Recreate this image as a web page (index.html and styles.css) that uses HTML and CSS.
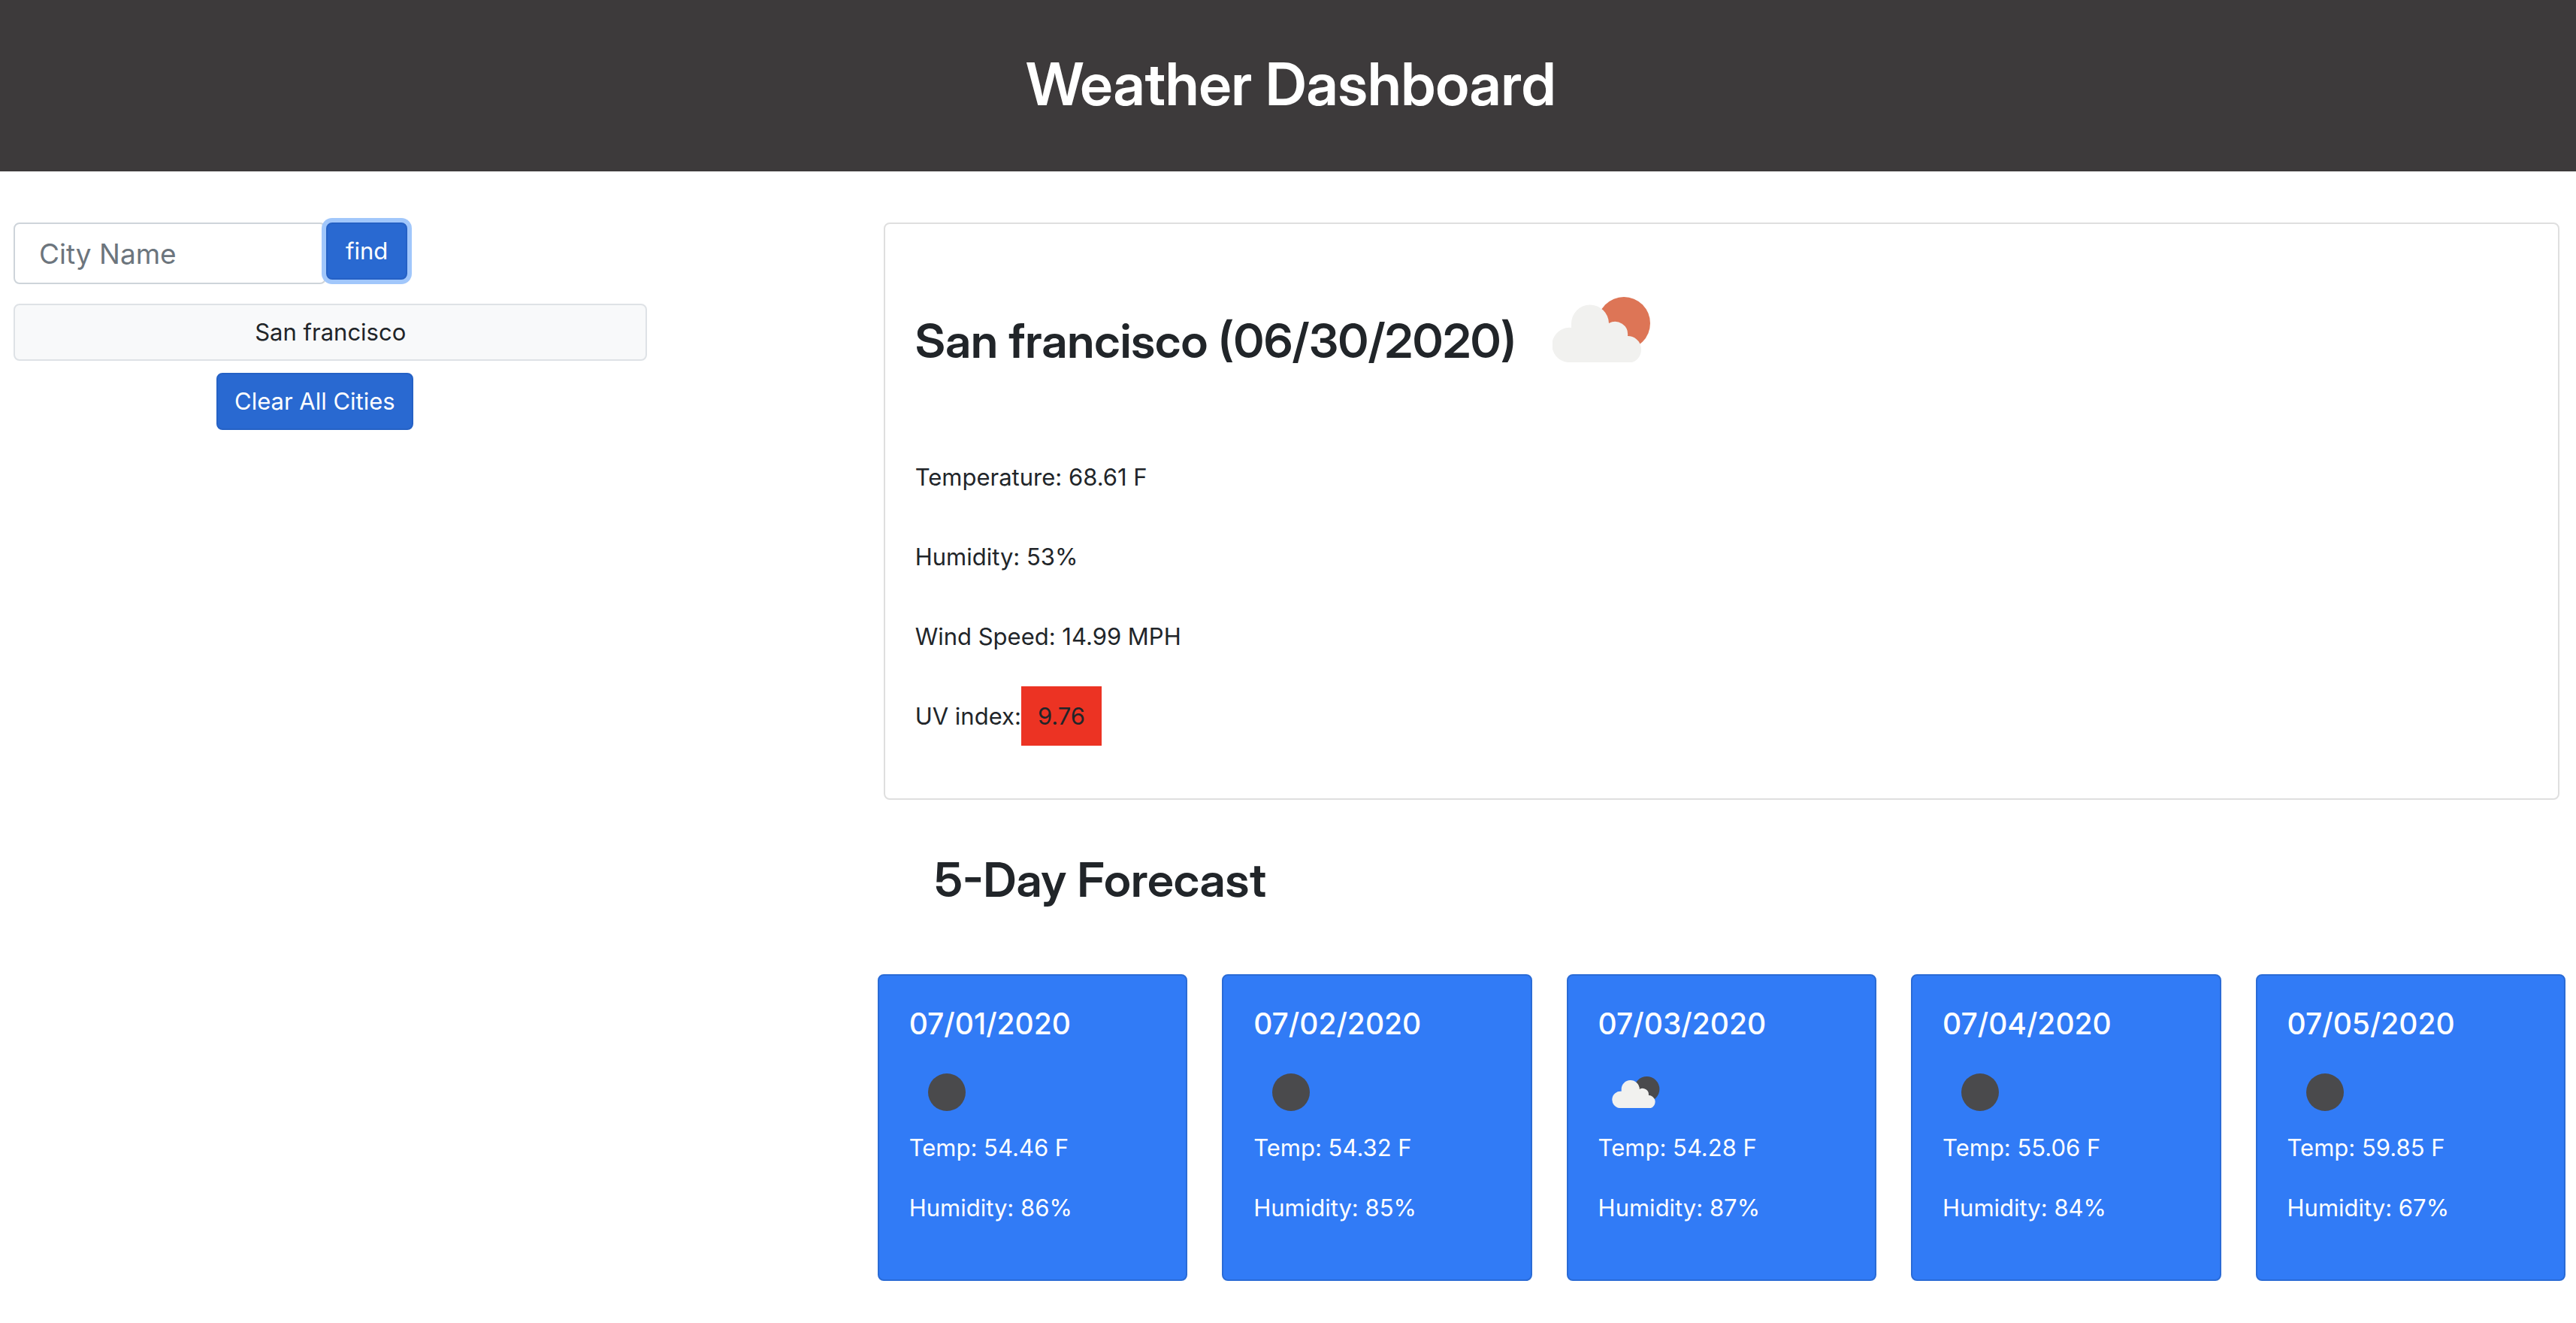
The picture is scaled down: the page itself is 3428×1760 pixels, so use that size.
FILE: index.html
```html
<!DOCTYPE html>
<html lang="en">
<head>
<meta charset="utf-8">
<meta name="viewport" content="width=device-width, initial-scale=1">
<title>Weather Dashboard</title>
<link rel="stylesheet" href="styles.css">
</head>
<body>
<svg class="sprite" aria-hidden="true">
  <symbol id="cloud" viewBox="0 0 130 87">
    <circle class="disc" cx="95" cy="35" r="35"/>
    <path class="cloud" d="M20 87A23 23 0 0 1 25 41V36A25 25 0 0 1 75 35A17 17 0 0 1 100 52A18 18 0 0 1 106 87Z"/>
  </symbol>
</svg>
<header class="banner"><h1>Weather Dashboard</h1></header>
<main class="layout">
  <section class="search">
    <form class="search-form">
      <input class="city-input" type="text" placeholder="City Name" aria-label="City Name">
      <button class="btn btn-focus" type="button">find</button>
    </form>
    <button class="city" type="button">San francisco</button>
    <button class="btn clear" type="button">Clear All Cities</button>
  </section>
  <section class="weather">
    <article class="current">
      <div class="current-head">
        <h2>San francisco (06/30/2020)</h2>
        <svg class="icon-large" role="img" aria-label="Broken clouds"><use href="#cloud"/></svg>
      </div>
      <p>Temperature: 68.61 F</p>
      <p>Humidity: 53%</p>
      <p>Wind Speed: 14.99 MPH</p>
      <p>UV index:<span class="uv">9.76</span></p>
    </article>
    <h2 class="forecast-title">5-Day Forecast</h2>
    <div class="forecast">
      <article class="day">
        <h3>07/01/2020</h3>
        <div class="day-icon"><span class="moon"></span></div>
        <p>Temp: 54.46 F</p>
        <p>Humidity: 86%</p>
      </article>
      <article class="day">
        <h3>07/02/2020</h3>
        <div class="day-icon"><span class="moon"></span></div>
        <p>Temp: 54.32 F</p>
        <p>Humidity: 85%</p>
      </article>
      <article class="day">
        <h3>07/03/2020</h3>
        <div class="day-icon"><svg class="icon-small" role="img" aria-label="Few clouds"><use href="#cloud"/></svg></div>
        <p>Temp: 54.28 F</p>
        <p>Humidity: 87%</p>
      </article>
      <article class="day">
        <h3>07/04/2020</h3>
        <div class="day-icon"><span class="moon"></span></div>
        <p>Temp: 55.06 F</p>
        <p>Humidity: 84%</p>
      </article>
      <article class="day">
        <h3>07/05/2020</h3>
        <div class="day-icon"><span class="moon"></span></div>
        <p>Temp: 59.85 F</p>
        <p>Humidity: 67%</p>
      </article>
    </div>
  </section>
</main>
</body>
</html>
```
FILE: styles.css
```css
* { box-sizing: border-box; }
body {
  margin: 0;
  background: #fff;
  color: #212529;
  font: 400 31px/48px Inter, "Liberation Sans", sans-serif;
}
h1, h2, h3, p { margin: 0; }
h1, h2 { font-family: "Inter Display", Inter, "Liberation Sans", sans-serif; font-weight: 600; }
h3 { font-weight: 500; }
p { font-weight: 400; }
button, input { font: inherit; }
.sprite { display: none; }

.banner {
  padding: 64px 0 68px 8px;
  background: #3d3a3b;
  color: #fff;
  text-align: center;
}
.banner h1 { font-size: 78px; line-height: 96px; }

.layout {
  display: grid;
  grid-template-columns: 1fr 2fr;
  padding-top: 68px;
}

.search {
  display: flex;
  flex-direction: column;
  align-items: flex-start;
  padding-left: 18px;
}
.search-form { display: flex; align-items: flex-start; }
.city-input {
  width: 416px;
  height: 82px;
  padding: 0 32px;
  border: 2px solid #ced4da;
  border-radius: 8px;
  background: #fff;
  color: #495057;
  font-size: 37px;
}
.city-input::placeholder { color: #6c757d; opacity: 1; }
.btn {
  height: 76px;
  padding: 0 24px;
  border: 2px solid #2561c5;
  border-radius: 8px;
  background: #2969d1;
  color: #fff;
}
.btn-focus { box-shadow: 0 0 0 6px #a1c7fb; }
.city {
  width: 75%;
  height: 76px;
  margin-top: 26px;
  border: 2px solid #dee2e6;
  border-radius: 8px;
  background: #f8f9fa;
  color: #212529;
}
.clear { margin: 16px 0 0 270px; padding: 0 22px; }

.weather { padding: 0 14px 56px 25px; }
.current {
  margin: 0 8px;
  padding: 40px;
  border: 2px solid #dfdfdf;
  border-radius: 8px;
}
.current-head {
  display: flex;
  align-items: flex-start;
  gap: 48px;
  height: 260px;
  padding-top: 57px;
}
.current h2 { padding-top: 20px; }
h2 { font-size: 63px; line-height: 76px; }
.current p { padding: 13px 0 45px; }
.uv { padding: 21px 22px; background: #ec3323; }
.icon-large { width: 130px; height: 87px; fill: #dd7556; }
.cloud { fill: #f1f1ef; }

.forecast-title { margin-top: 68px; padding-left: 76px; }
.forecast {
  display: grid;
  grid-template-columns: repeat(5, 1fr);
  gap: 46px;
  margin-top: 88px;
}
.day {
  height: 408px;
  padding: 40px;
  border: 2px solid #2a6bd6;
  border-radius: 8px;
  background: #317bf6;
  color: #fff;
}
.day h3 { font-size: 39px; line-height: 48px; }
.day-icon {
  display: flex;
  align-items: center;
  justify-content: center;
  width: 100px;
  height: 100px;
  margin-top: 17px;
}
.moon { width: 50px; height: 50px; border-radius: 50%; background: #4a4a4c; }
.icon-small { width: 64px; height: 42px; fill: #4a4a4c; }
.day p + p { margin-top: 32px; }
```
